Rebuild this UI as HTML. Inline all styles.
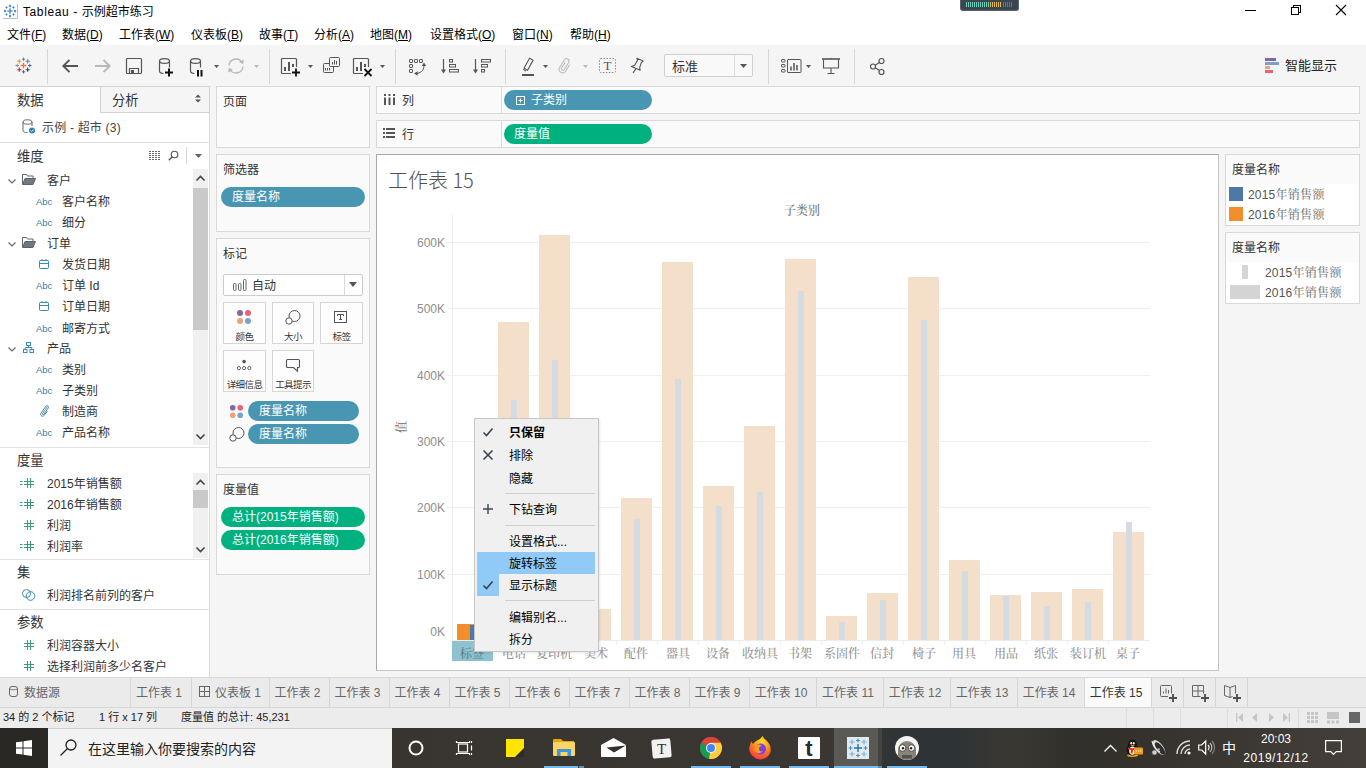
<!DOCTYPE html>
<html lang="zh-CN"><head><meta charset="utf-8"><title>Tableau - 示例超市练习</title>
<style>
*{box-sizing:border-box;margin:0;padding:0}
html,body{width:1366px;height:768px;overflow:hidden;background:#fff}
body{font-family:"Liberation Sans","Noto Sans CJK SC",sans-serif;font-size:12px;color:#333;position:relative}
.a{position:absolute;white-space:nowrap}
.t{position:absolute;white-space:nowrap;line-height:1;margin-top:1px}
.serif{font-family:"Liberation Serif","Noto Serif CJK SC",serif;font-weight:500}
.card{position:absolute;background:#fafafa;border:1px solid #d9d9d9}
.pill{position:absolute;height:20px;border-radius:10px;color:#fff;font-size:12px;line-height:20px;white-space:nowrap}
.blue{background:#4996b2}
.green{background:#00b180}
.sep{position:absolute;background:#d4d4d4}
u{text-decoration:underline;text-underline-offset:1px}
svg{position:absolute;overflow:visible}
</style></head><body>

<div class="a" style="left:0;top:0;width:1366px;height:45px;background:#fff"></div>
<svg style="left:3px;top:4px" width="15" height="15" viewBox="0 0 15 15"><rect x="0" y="0" width="14" height="14" fill="#fff"/><path d="M14.500 0v14.500H0" fill="none" stroke="#bdbdbd" stroke-width="1"/>
<g stroke="#2f7dbd" stroke-width="1.200"><path d="M7 4.200v5.600M4.200 7h5.600"/><path d="M7 0.800v2.400M5.800 2h2.400M7 10.800v2.400M5.800 12h2.400M0.800 7h2.400M2 5.800v2.400M10.800 7h2.400M12 5.800v2.400"/><path d="M3.500 2.500v2M2.500 3.500h2M10.500 2.500v2M9.500 3.500h2M3.500 9.500v2M2.500 10.500h2M10.500 9.500v2M9.500 10.500h2" stroke-width="1"/></g></svg>
<div class="t" style="left:23px;top:5px;font-size:12px;color:#000"><span style="letter-spacing:0.6px">Tableau - </span>示例超市练习</div>
<svg style="left:1240px;top:0" width="126" height="22" viewBox="0 0 126 22"><g stroke="#000" stroke-width="1" fill="none" shape-rendering="crispEdges">
<path d="M5 10.5h11"/>
<rect x="51.5" y="7.5" width="7" height="7"/><path d="M53.500 7.500v-2h7v7h-2"/>
</g><path d="M96 5l10 10M106 5l-10 10" stroke="#000" stroke-width="1.1" fill="none"/></svg>
<div class="a" style="left:960px;top:0;width:59px;height:11px;background:#3c4552;border:1px solid #5a6470;border-top:none;border-radius:0 0 3px 3px"></div>
<div class="a" style="left:966px;top:2px;width:36px;height:5px;background:repeating-linear-gradient(90deg,#6fd0b8 0 1px,transparent 1px 2px)"></div>
<div class="a" style="left:990px;top:2px;width:12px;height:5px;background:repeating-linear-gradient(90deg,#e0b84e 0 1px,#3c4552 1px 2px)"></div>
<div class="a" style="left:1003px;top:2px;width:10px;height:5px;background:repeating-linear-gradient(90deg,#6c7480 0 1px,transparent 1px 2px)"></div>
<div class="t" style="left:7px;top:28px;font-size:12px;color:#000">文件(<u>F</u>)</div>
<div class="t" style="left:62px;top:28px;font-size:12px;color:#000">数据(<u>D</u>)</div>
<div class="t" style="left:119px;top:28px;font-size:12px;color:#000">工作表(<u>W</u>)</div>
<div class="t" style="left:191px;top:28px;font-size:12px;color:#000">仪表板(<u>B</u>)</div>
<div class="t" style="left:259px;top:28px;font-size:12px;color:#000">故事(<u>T</u>)</div>
<div class="t" style="left:314px;top:28px;font-size:12px;color:#000">分析(<u>A</u>)</div>
<div class="t" style="left:370px;top:28px;font-size:12px;color:#000">地图(<u>M</u>)</div>
<div class="t" style="left:430px;top:28px;font-size:12px;color:#000">设置格式(<u>O</u>)</div>
<div class="t" style="left:512px;top:28px;font-size:12px;color:#000">窗口(<u>N</u>)</div>
<div class="t" style="left:570px;top:28px;font-size:12px;color:#000">帮助(<u>H</u>)</div>
<div class="a" style="left:0;top:45px;width:1366px;height:41px;background:#f5f5f5"></div>
<div class="a" style="left:47px;top:49px;width:1px;height:35px;background:#d6d6d6"></div>
<div class="a" style="left:269px;top:49px;width:1px;height:35px;background:#d6d6d6"></div>
<div class="a" style="left:395px;top:49px;width:1px;height:35px;background:#d6d6d6"></div>
<div class="a" style="left:505px;top:49px;width:1px;height:35px;background:#d6d6d6"></div>
<div class="a" style="left:768px;top:49px;width:1px;height:35px;background:#d6d6d6"></div>
<div class="a" style="left:854px;top:49px;width:1px;height:35px;background:#d6d6d6"></div>
<svg style="left:15px;top:57px" width="17" height="17" viewBox="0 0 17 17"><path d="M8.5 5.7v5.6M5.7 8.5h5.6" stroke="#e8762d" stroke-width="1.3"/><path d="M8.5 0.5v3.4M6.8 2.2h3.4" stroke="#5b879b" stroke-width="1.0"/><path d="M8.5 13.1v3.4M6.8 14.8h3.4" stroke="#5b6591" stroke-width="1.0"/><path d="M2.2 6.8v3.4M0.5 8.5h3.4" stroke="#7199a6" stroke-width="1.0"/><path d="M14.8 6.8v3.4M13.1 8.5h3.4" stroke="#5b6591" stroke-width="1.0"/><path d="M4.3 2.2v4.2M2.2 4.3h4.2" stroke="#eb9129" stroke-width="1.1"/><path d="M12.7 2.2v4.2M10.6 4.3h4.2" stroke="#59879b" stroke-width="1.1"/><path d="M4.3 10.6v4.2M2.2 12.7h4.2" stroke="#c72035" stroke-width="1.1"/><path d="M12.7 10.6v4.2M10.6 12.7h4.2" stroke="#1f447e" stroke-width="1.1"/></svg>
<svg style="left:62px;top:59px" width="17" height="14" viewBox="0 0 17 14"><path d="M16 7H1.500M7.500 0.800L1.300 7l6.200 6.200" fill="none" stroke="#555" stroke-width="1.900"/></svg>
<svg style="left:94px;top:59px" width="17" height="14" viewBox="0 0 17 14"><path d="M1 7h14.500M9.500 0.800L15.700 7l-6.200 6.200" fill="none" stroke="#b8b8b8" stroke-width="1.900"/></svg>
<svg style="left:126px;top:58px" width="16" height="16" viewBox="0 0 16 16"><rect x="0.500" y="0.500" width="15" height="15" rx="1" fill="none" stroke="#555" stroke-width="1.200"/><path d="M3.500 15.500v-5h9v5" fill="none" stroke="#555" stroke-width="1.200"/><rect x="5" y="12" width="3" height="3.500" fill="#555"/></svg>
<svg style="left:159px;top:58px" width="16" height="19" viewBox="0 0 16 19"><g fill="none" stroke="#555" stroke-width="1.200"><ellipse cx="5.500" cy="3" rx="5" ry="2.400"/><path d="M0.500 3v10c0 1.300 1.500 2.300 4 2.500M10.500 3v6.500"/></g><path d="M10 10.500v8M6 14.500h8" stroke="#111" stroke-width="2"/></svg>
<svg style="left:190px;top:58px" width="16" height="19" viewBox="0 0 16 19"><g fill="none" stroke="#555" stroke-width="1.200"><ellipse cx="5.500" cy="3" rx="5" ry="2.400"/><path d="M0.500 3v10c0 1.300 1.500 2.300 4 2.500M10.500 3v6.500"/></g><path d="M8 12v6.500M11.500 12v6.500" stroke="#111" stroke-width="2"/></svg>
<svg style="left:214px;top:65px" width="5" height="3" viewBox="0 0 5 3"><path d="M0 0h5l-2.500 3z" fill="#555"/></svg>
<svg style="left:227px;top:57px" width="18" height="18" viewBox="0 0 18 18"><g fill="none" stroke="#b8b8b8" stroke-width="1.300"><path d="M2 8.500a7 7 0 0 1 13-3"/><path d="M16 9.500a7 7 0 0 1-13 3"/></g><path d="M16.800 2.500l-0.600 4.800-4.200-2.300z" fill="#b8b8b8"/><path d="M1.200 15.500l0.600-4.800 4.200 2.300z" fill="#b8b8b8"/></svg>
<svg style="left:254px;top:65px" width="5" height="3" viewBox="0 0 5 3"><path d="M0 0h5l-2.500 3z" fill="#b8b8b8"/></svg>
<svg style="left:281px;top:58px" width="20" height="19" viewBox="0 0 20 19"><rect x="0.500" y="0.500" width="15" height="15" rx="1" fill="none" stroke="#555" stroke-width="1.200"/><rect x="3" y="9" width="2" height="4" fill="#555"/><rect x="7" y="4" width="2" height="9" fill="#555"/><rect x="11" y="6" width="2" height="7" fill="#555"/><rect x="10" y="9" width="10" height="10" fill="#f5f5f5"/><path d="M15 10.500v8M11 14.500h8" stroke="#111" stroke-width="1.800"/></svg>
<svg style="left:308px;top:65px" width="5" height="3" viewBox="0 0 5 3"><path d="M0 0h5l-2.500 3z" fill="#555"/></svg>
<svg style="left:323px;top:57px" width="18" height="17" viewBox="0 0 18 17"><g fill="none" stroke="#555" stroke-width="1"><rect x="0.500" y="6.500" width="10" height="9" rx="1"/><rect x="6.500" y="0.500" width="10" height="9" rx="1" fill="#f5f5f5"/><path d="M9.500 7.500v-2.500M11.500 7.500v-4.500M13.500 7.500v-3.500"/><path d="M2.500 13.500v-2.500M4.500 13.500v-2.500M6.500 13.500v-2.500"/></g></svg>
<svg style="left:353px;top:58px" width="20" height="19" viewBox="0 0 20 19"><rect x="0.500" y="0.500" width="15" height="15" rx="1" fill="none" stroke="#555" stroke-width="1.200"/><rect x="3" y="9" width="2" height="4" fill="#555"/><rect x="7" y="4" width="2" height="9" fill="#555"/><rect x="11" y="6" width="2" height="7" fill="#555"/><rect x="10" y="9" width="10" height="10" fill="#f5f5f5"/><path d="M11.500 11l7 7M18.500 11l-7 7" stroke="#111" stroke-width="1.800"/></svg>
<svg style="left:380px;top:65px" width="5" height="3" viewBox="0 0 5 3"><path d="M0 0h5l-2.500 3z" fill="#555"/></svg>
<svg style="left:409px;top:59px" width="17" height="17" viewBox="0 0 17 17"><g fill="none" stroke="#555" stroke-width="1"><rect x="0.500" y="0.500" width="3" height="3" rx="0.500"/><rect x="5.500" y="0.500" width="3" height="3" rx="0.500"/><rect x="10.500" y="0.500" width="3" height="3" rx="0.500"/><rect x="0.500" y="5.500" width="3" height="3" rx="0.500"/><rect x="0.500" y="10.500" width="3" height="3" rx="0.500"/><path d="M15 6.500c0 5-3.500 8-8.500 8"/></g><path d="M15 3.500l2.200 3.600h-4.400z" fill="#555"/><path d="M5 14.500l3.600-2.200v4.400z" fill="#555"/></svg>
<svg style="left:441px;top:59px" width="18" height="15" viewBox="0 0 18 15"><path d="M2.500 0v13" stroke="#555" stroke-width="1.200"/><path d="M0 10.500h5l-2.500 4z" fill="#555"/><g fill="none" stroke="#555"><rect x="8.500" y="0.500" width="3" height="2.500"/><rect x="8.500" y="5.500" width="6" height="2.500"/><rect x="8.500" y="10.500" width="9" height="2.500"/></g></svg>
<svg style="left:473px;top:59px" width="18" height="15" viewBox="0 0 18 15"><path d="M2.500 0v13" stroke="#555" stroke-width="1.200"/><path d="M0 10.500h5l-2.500 4z" fill="#555"/><g fill="none" stroke="#555"><rect x="8.500" y="0.500" width="9" height="2.500"/><rect x="8.500" y="5.500" width="6" height="2.500"/><rect x="8.500" y="10.500" width="3" height="2.500"/></g></svg>
<svg style="left:522px;top:57px" width="13" height="20" viewBox="0 0 13 20"><path d="M7.600 1.200L11.100 3.100L5.600 13.300L2.100 11.100zM1.300 12.300l2.800 1.800" fill="none" stroke="#555" stroke-width="1.100"/><path d="M0 18h12" stroke="#555" stroke-width="2"/></svg>
<svg style="left:543px;top:65px" width="5" height="3" viewBox="0 0 5 3"><path d="M0 0h5l-2.500 3z" fill="#555"/></svg>
<svg style="left:558px;top:57px" width="14" height="17" viewBox="0 0 14 17"><g transform="rotate(32 7 8.500) translate(4 1)"><path d="M1.500 4.500V11.500A1.500 1.500 0 0 0 4.500 11.500V3A2.500 2.500 0 0 0 -0.500 3V12A3.500 3.500 0 0 0 6.500 12V4.500" fill="none" stroke="#b8b8b8" stroke-width="1"/></g></svg>
<svg style="left:583px;top:65px" width="5" height="3" viewBox="0 0 5 3"><path d="M0 0h5l-2.500 3z" fill="#b8b8b8"/></svg>
<svg style="left:599px;top:58px" width="17" height="15" viewBox="0 0 17 15"><rect x="0.500" y="0.500" width="16" height="14" rx="1" fill="none" stroke="#8a8a8a" stroke-dasharray="1.500 1.500"/><text x="8.500" y="12.200" text-anchor="middle" font-family="Liberation Serif,serif" font-size="13" fill="#555">T</text></svg>
<svg style="left:630px;top:57px" width="14" height="17" viewBox="0 0 14 17"><path d="M6.900 1.200L13.200 4L11.300 5.600L9.700 10.600L10.200 13.300L1.400 9.500L4.700 8.200L7.500 3.400zM5.800 11.700L3.100 15.900" fill="none" stroke="#555" stroke-width="1.100" stroke-linejoin="round"/></svg>
<div class="a" style="left:664px;top:54px;width:89px;height:23px;background:#f9f9f9;border:1px solid #cfcfcf;border-radius:2px"></div>
<div class="a" style="left:734px;top:55px;width:1px;height:21px;background:#dcdcdc"></div>
<svg style="left:740px;top:64px" width="7" height="4" viewBox="0 0 7 4"><path d="M0 0h7l-3.500 4z" fill="#555"/></svg>
<div class="t" style="left:672px;top:59px;font-size:13px;color:#333">标准</div>
<svg style="left:781px;top:59px" width="21" height="14" viewBox="0 0 21 14"><g fill="none" stroke="#555"><rect x="0.500" y="0.500" width="3.500" height="2.500" rx="0.500"/><rect x="0.500" y="5.500" width="3.500" height="2.500" rx="0.500"/><rect x="0.500" y="10.500" width="3.500" height="2.500" rx="0.500"/><rect x="6.500" y="0.500" width="13.500" height="13" rx="0.500"/></g><path d="M10 11.500v-4M13 11.500v-7.500M16 11.500v-5.500" stroke="#555" stroke-width="1.500"/></svg>
<svg style="left:806px;top:65px" width="5" height="3" viewBox="0 0 5 3"><path d="M0 0h5l-2.500 3z" fill="#555"/></svg>
<svg style="left:822px;top:58px" width="18" height="17" viewBox="0 0 18 17"><path d="M0 1h18" stroke="#555" stroke-width="1.600"/><path d="M1.500 1.500v8.500h15v-8.500M9 10v5.500M5.500 15.500h7M9 0v1" fill="none" stroke="#555" stroke-width="1.100"/></svg>
<svg style="left:870px;top:58px" width="15" height="17" viewBox="0 0 15 17"><g fill="none" stroke="#555" stroke-width="1.200"><circle cx="11.500" cy="3" r="2.500"/><circle cx="3" cy="8.500" r="2.500"/><circle cx="11.500" cy="14" r="2.500"/><path d="M5.200 7.200l4.200-2.800M5.200 9.800l4.200 2.800"/></g></svg>
<div class="a" style="left:1265px;top:58px;width:11px;height:3px;background:#85689b"></div>
<div class="a" style="left:1265px;top:62px;width:14px;height:3px;background:#7a9fcb"></div>
<div class="a" style="left:1265px;top:66px;width:5px;height:3px;background:#eba473"></div>
<div class="a" style="left:1265px;top:70px;width:8px;height:3px;background:#ea6179"></div>
<div class="t" style="left:1285px;top:58px;font-size:13px;color:#222">智能显示</div>
<div class="a" style="left:0;top:86px;width:1366px;height:594px;background:#f5f5f5"></div>
<div class="a" style="left:0;top:86px;width:210px;height:591px;background:#fff;border-right:1px solid #dcdcdc;border-top:1px solid #d2d2d2"></div>
<div class="a" style="left:100px;top:86px;width:110px;height:27px;background:#f5f5f5;border:1px solid #d2d2d2"></div>
<div class="t" style="left:17px;top:93px;font-size:13.300px;color:#333">数据</div>
<div class="t" style="left:112px;top:93px;font-size:13.300px;color:#333">分析</div>
<svg style="left:195px;top:94px" width="6" height="9" viewBox="0 0 6 9"><path d="M0 3.500L3 0.500L6 3.500zM0 5.500L3 8.500L6 5.500z" fill="#555"/></svg>
<svg style="left:22px;top:119px" width="14" height="15" viewBox="0 0 14 15"><g fill="none" stroke="#666" stroke-width="1"><ellipse cx="5.500" cy="3" rx="4.500" ry="2.200"/><path d="M1 3v8.500c0 1.200 2 2.200 4.500 2.200M10 3v4"/></g><circle cx="10" cy="11.500" r="3" fill="#2f80b5"/><path d="M8.600 11.500l1 1 1.800-2" stroke="#fff" stroke-width="0.900" fill="none"/></svg>
<div class="t" style="left:42px;top:121px;font-size:12px;letter-spacing:0.200px;color:#444">示例 - 超市 (3)</div>
<div class="a" style="left:0;top:142px;width:209px;height:1px;background:#e2e2e2"></div>
<div class="t" style="left:17px;top:149px;font-size:13.300px;color:#333">维度</div>
<svg style="left:149px;top:151px" width="11" height="9" viewBox="0 0 11 9"><path d="M0 0.500h2M3 0.500h2M6 0.500h2M9 0.500h2M0 2.500h2M3 2.500h2M6 2.500h2M9 2.500h2M0 4.500h2M3 4.500h2M6 4.500h2M9 4.500h2M0 6.500h2M3 6.500h2M6 6.500h2M9 6.500h2M0 8.500h2M3 8.500h2M6 8.500h2M9 8.500h2" stroke="#666" stroke-width="1"/></svg>
<svg style="left:168px;top:150px" width="11" height="11" viewBox="0 0 11 11"><circle cx="6.500" cy="4.500" r="3.300" fill="none" stroke="#555" stroke-width="1.100"/><path d="M4 7l-3.200 3.200" stroke="#555" stroke-width="1.300"/></svg>
<div class="a" style="left:186px;top:147px;width:1px;height:17px;background:#d4d4d4"></div>
<svg style="left:195px;top:154px" width="7" height="4" viewBox="0 0 7 4"><path d="M0 0h7l-3.500 4z" fill="#666"/></svg>
<svg style="left:8px;top:179px" width="8" height="5" viewBox="0 0 8 5"><path d="M0.500 0.500l3.500 3.500 3.500-3.500" fill="none" stroke="#666" stroke-width="1.100"/></svg>
<svg style="left:22px;top:174px" width="14" height="11" viewBox="0 0 14 11"><path d="M0.500 10V0.500h4l1 1.500h5.500v2" fill="none" stroke="#666" stroke-width="1"/><path d="M0.500 10.500l2.500-6h10.500l-2.500 6z" fill="#707880" stroke="#5c6268" stroke-width="1"/></svg>
<div class="t" style="left:47px;top:174px;font-size:12px;color:#333">客户</div>
<div class="t" style="left:36px;top:196px;font-size:9.500px;color:#3b7d9c">Abc</div>
<div class="t" style="left:62px;top:195px;font-size:12px;color:#333">客户名称</div>
<div class="t" style="left:36px;top:217px;font-size:9.500px;color:#3b7d9c">Abc</div>
<div class="t" style="left:62px;top:216px;font-size:12px;color:#333">细分</div>
<svg style="left:8px;top:242px" width="8" height="5" viewBox="0 0 8 5"><path d="M0.500 0.500l3.500 3.500 3.500-3.500" fill="none" stroke="#666" stroke-width="1.100"/></svg>
<svg style="left:22px;top:237px" width="14" height="11" viewBox="0 0 14 11"><path d="M0.500 10V0.500h4l1 1.500h5.500v2" fill="none" stroke="#666" stroke-width="1"/><path d="M0.500 10.500l2.500-6h10.500l-2.500 6z" fill="#707880" stroke="#5c6268" stroke-width="1"/></svg>
<div class="t" style="left:47px;top:237px;font-size:12px;color:#333">订单</div>
<svg style="left:39px;top:259px" width="10" height="10" viewBox="0 0 10 10"><rect x="0.500" y="1.500" width="9" height="8" rx="0.800" fill="none" stroke="#3b8db0" stroke-width="1"/><path d="M0.500 4.500h9M3 0v2M7 0v2" stroke="#3b8db0" stroke-width="1"/></svg>
<div class="t" style="left:62px;top:258px;font-size:12px;color:#333">发货日期</div>
<div class="t" style="left:36px;top:280px;font-size:9.500px;color:#3b7d9c">Abc</div>
<div class="t" style="left:62px;top:279px;font-size:12px;color:#333">订单 Id</div>
<svg style="left:39px;top:301px" width="10" height="10" viewBox="0 0 10 10"><rect x="0.500" y="1.500" width="9" height="8" rx="0.800" fill="none" stroke="#3b8db0" stroke-width="1"/><path d="M0.500 4.500h9M3 0v2M7 0v2" stroke="#3b8db0" stroke-width="1"/></svg>
<div class="t" style="left:62px;top:300px;font-size:12px;color:#333">订单日期</div>
<div class="t" style="left:36px;top:323px;font-size:9.500px;color:#3b7d9c">Abc</div>
<div class="t" style="left:62px;top:322px;font-size:12px;color:#333">邮寄方式</div>
<svg style="left:8px;top:347px" width="8" height="5" viewBox="0 0 8 5"><path d="M0.500 0.500l3.500 3.500 3.500-3.500" fill="none" stroke="#666" stroke-width="1.100"/></svg>
<svg style="left:23px;top:342px" width="11" height="11" viewBox="0 0 11 11"><g fill="none" stroke="#3b8db0" stroke-width="1"><rect x="3.500" y="0.500" width="4" height="3"/><rect x="0.500" y="7.500" width="3.500" height="3"/><rect x="7" y="7.500" width="3.500" height="3"/><path d="M5.500 3.500v2M2.200 7.500v-2h6.600v2"/></g></svg>
<div class="t" style="left:47px;top:342px;font-size:12px;color:#333">产品</div>
<div class="t" style="left:36px;top:364px;font-size:9.500px;color:#3b7d9c">Abc</div>
<div class="t" style="left:62px;top:363px;font-size:12px;color:#333">类别</div>
<div class="t" style="left:36px;top:385px;font-size:9.500px;color:#3b7d9c">Abc</div>
<div class="t" style="left:62px;top:384px;font-size:12px;color:#333">子类别</div>
<svg style="left:39px;top:404px" width="11" height="13" viewBox="0 0 11 13"><path d="M8.500 2.500L3.500 9.500c-0.600 0.900 0.700 1.700 1.300 0.900L9.300 4c1.100-1.700-1.400-3.300-2.500-1.700L2 9c-1.600 2.400 1.800 4.500 3.400 2.200L8.500 7" fill="none" stroke="#3b7d9c" stroke-width="0.900"/></svg>
<div class="t" style="left:62px;top:405px;font-size:12px;color:#333">制造商</div>
<div class="t" style="left:36px;top:427px;font-size:9.500px;color:#3b7d9c">Abc</div>
<div class="t" style="left:62px;top:426px;font-size:12px;color:#333">产品名称</div>
<div class="a" style="left:193px;top:169px;width:15px;height:276px;background:#f0f0f0"></div>
<div class="a" style="left:193px;top:188px;width:15px;height:142px;background:#c9c9c9"></div>
<svg style="left:196px;top:175px" width="9" height="6" viewBox="0 0 9 6"><path d="M0.500 5.500l4-4 4 4" fill="none" stroke="#444" stroke-width="1.600"/></svg>
<svg style="left:196px;top:434px" width="9" height="6" viewBox="0 0 9 6"><path d="M0.500 0.500l4 4 4-4" fill="none" stroke="#444" stroke-width="1.600"/></svg>
<div class="a" style="left:0;top:447px;width:209px;height:1px;background:#e2e2e2"></div>
<div class="t" style="left:17px;top:453px;font-size:13.300px;color:#333">度量</div>
<svg style="left:19px;top:478px" width="16" height="10" viewBox="0 0 16 10"><g stroke="#3a9a78" stroke-width="1" fill="none"><path d="M1 3.500h2.500M1 6.500h2.500"/><path d="M5 3.500h10M5 6.500h10M8.500 0v10M11.500 0v10"/></g></svg>
<div class="t" style="left:47px;top:477px;font-size:12px;color:#333">2015年销售额</div>
<svg style="left:19px;top:499px" width="16" height="10" viewBox="0 0 16 10"><g stroke="#3a9a78" stroke-width="1" fill="none"><path d="M1 3.500h2.500M1 6.500h2.500"/><path d="M5 3.500h10M5 6.500h10M8.500 0v10M11.500 0v10"/></g></svg>
<div class="t" style="left:47px;top:498px;font-size:12px;color:#333">2016年销售额</div>
<svg style="left:19px;top:520px" width="16" height="10" viewBox="0 0 16 10"><g stroke="#3a9a78" stroke-width="1" fill="none"><path d="M5 3.500h10M5 6.500h10M8.500 0v10M11.500 0v10"/></g></svg>
<div class="t" style="left:47px;top:519px;font-size:12px;color:#333">利润</div>
<svg style="left:19px;top:541px" width="16" height="10" viewBox="0 0 16 10"><g stroke="#3a9a78" stroke-width="1" fill="none"><path d="M1 3.500h2.500M1 6.500h2.500"/><path d="M5 3.500h10M5 6.500h10M8.500 0v10M11.500 0v10"/></g></svg>
<div class="t" style="left:47px;top:540px;font-size:12px;color:#333">利润率</div>
<div class="a" style="left:193px;top:473px;width:15px;height:85px;background:#f0f0f0"></div>
<div class="a" style="left:193px;top:490px;width:15px;height:18px;background:#c9c9c9"></div>
<svg style="left:196px;top:479px" width="9" height="6" viewBox="0 0 9 6"><path d="M0.500 5.500l4-4 4 4" fill="none" stroke="#444" stroke-width="1.600"/></svg>
<svg style="left:196px;top:547px" width="9" height="6" viewBox="0 0 9 6"><path d="M0.500 0.500l4 4 4-4" fill="none" stroke="#444" stroke-width="1.600"/></svg>
<div class="a" style="left:0;top:559px;width:209px;height:1px;background:#e2e2e2"></div>
<div class="t" style="left:17px;top:565px;font-size:13.300px;color:#333">集</div>
<svg style="left:22px;top:589px" width="14" height="12" viewBox="0 0 14 12"><circle cx="4.500" cy="4.500" r="4" fill="none" stroke="#3b8db0" stroke-width="1"/><circle cx="8.500" cy="7" r="4.300" fill="none" stroke="#3b8db0" stroke-width="1"/></svg>
<div class="t" style="left:47px;top:589px;font-size:12px;color:#333">利润排名前列的客户</div>
<div class="a" style="left:0;top:609px;width:209px;height:1px;background:#e2e2e2"></div>
<div class="t" style="left:17px;top:615px;font-size:13.300px;color:#333">参数</div>
<svg style="left:19px;top:640px" width="16" height="10" viewBox="0 0 16 10"><g stroke="#3a9a78" stroke-width="1" fill="none"><path d="M5 3.500h10M5 6.500h10M8.500 0v10M11.500 0v10"/></g></svg>
<div class="t" style="left:47px;top:639px;font-size:12px;color:#333">利润容器大小</div>
<svg style="left:19px;top:661px" width="16" height="10" viewBox="0 0 16 10"><g stroke="#3a9a78" stroke-width="1" fill="none"><path d="M5 3.500h10M5 6.500h10M8.500 0v10M11.500 0v10"/></g></svg>
<div class="t" style="left:47px;top:660px;font-size:12px;color:#333">选择利润前多少名客户</div>
<div class="card" style="left:216px;top:86px;width:154px;height:62px"></div>
<div class="t" style="left:223px;top:95px;font-size:12px;color:#333">页面</div>
<div class="card" style="left:216px;top:154px;width:154px;height:78px"></div>
<div class="t" style="left:223px;top:163px;font-size:12px;color:#333">筛选器</div>
<div class="pill blue" style="left:221px;top:187px;width:144px;padding-left:11px">度量名称</div>
<div class="card" style="left:216px;top:238px;width:154px;height:230px"></div>
<div class="t" style="left:223px;top:247px;font-size:12px;color:#333">标记</div>
<div class="a" style="left:223px;top:274px;width:140px;height:22px;background:#fff;border:1px solid #ccc;border-radius:2px"></div>
<div class="a" style="left:344px;top:275px;width:1px;height:20px;background:#d9d9d9"></div>
<svg style="left:349px;top:282px" width="8" height="5" viewBox="0 0 8 5"><path d="M0 0h8l-4 5z" fill="#555"/></svg>
<svg style="left:233px;top:279px" width="15" height="12" viewBox="0 0 15 12"><g fill="none" stroke="#666" stroke-width="1"><rect x="0.500" y="4.500" width="2.500" height="7" rx="1"/><rect x="5.500" y="4.500" width="2.500" height="7" rx="1"/><rect x="10.500" y="0.500" width="2.500" height="11" rx="1"/></g></svg>
<div class="t" style="left:252px;top:279px;font-size:12px;color:#333">自动</div>
<div class="a" style="left:223px;top:302px;width:43px;height:42px;background:#fdfdfd;border:1px solid #d6d6d6"></div>
<div class="t" style="left:223px;top:331px;width:43px;text-align:center;font-size:9.500px;color:#333;letter-spacing:-0.600px">颜色</div>
<div class="a" style="left:272px;top:302px;width:42px;height:42px;background:#fdfdfd;border:1px solid #d6d6d6"></div>
<div class="t" style="left:272px;top:331px;width:42px;text-align:center;font-size:9.500px;color:#333;letter-spacing:-0.600px">大小</div>
<div class="a" style="left:320px;top:302px;width:43px;height:42px;background:#fdfdfd;border:1px solid #d6d6d6"></div>
<div class="t" style="left:320px;top:331px;width:43px;text-align:center;font-size:9.500px;color:#333;letter-spacing:-0.600px">标签</div>
<div class="a" style="left:223px;top:350px;width:43px;height:42px;background:#fdfdfd;border:1px solid #d6d6d6"></div>
<div class="t" style="left:223px;top:379px;width:43px;text-align:center;font-size:9.500px;color:#333;letter-spacing:-0.600px">详细信息</div>
<div class="a" style="left:272px;top:350px;width:42px;height:42px;background:#fdfdfd;border:1px solid #d6d6d6"></div>
<div class="t" style="left:272px;top:379px;width:42px;text-align:center;font-size:9.500px;color:#333;letter-spacing:-0.600px">工具提示</div>
<svg style="left:236px;top:309px" width="16" height="16" viewBox="0 0 16 16"><circle cx="4" cy="4" r="3" fill="#85689b"/><circle cx="12" cy="4" r="3" fill="#ea6179"/><circle cx="4" cy="12" r="3" fill="#eba473"/><circle cx="12" cy="12" r="3" fill="#7a9fcb"/></svg>
<svg style="left:285px;top:310px" width="16" height="15" viewBox="0 0 16 15"><circle cx="9.500" cy="6" r="5.500" fill="none" stroke="#555" stroke-width="1"/><circle cx="4" cy="11" r="3.200" fill="#fdfdfd" stroke="#555" stroke-width="1"/></svg>
<svg style="left:334px;top:311px" width="13" height="12" viewBox="0 0 13 12"><rect x="0.500" y="0.500" width="12" height="11" fill="none" stroke="#555" stroke-width="1"/><path d="M3.500 3.500h6M3.500 3.500v1.500M9.500 3.500v1.500M6.500 3.500v5M5 8.500h3" stroke="#555" stroke-width="1" fill="none"/></svg>
<svg style="left:236px;top:359px" width="16" height="12" viewBox="0 0 16 12"><circle cx="8.100" cy="2.600" r="1.800" fill="#555"/><circle cx="2.900" cy="9.100" r="1.600" fill="none" stroke="#555" stroke-width="0.900"/><circle cx="8.100" cy="9.100" r="1.600" fill="none" stroke="#555" stroke-width="0.900"/><circle cx="13.300" cy="9.100" r="1.600" fill="none" stroke="#555" stroke-width="0.900"/></svg>
<svg style="left:286px;top:359px" width="14" height="13" viewBox="0 0 14 13"><path d="M1.500 0.500h11a1 1 0 0 1 1 1v6a1 1 0 0 1-1 1h-1v3.700l-4-3.700h-6a1 1 0 0 1-1-1v-6a1 1 0 0 1 1-1z" fill="none" stroke="#555" stroke-width="1.100"/></svg>
<svg style="left:229px;top:404px" width="15" height="15" viewBox="0 0 16 16"><circle cx="4" cy="4" r="3" fill="#85689b"/><circle cx="12" cy="4" r="3" fill="#ea6179"/><circle cx="4" cy="12" r="3" fill="#eba473"/><circle cx="12" cy="12" r="3" fill="#7a9fcb"/></svg>
<div class="pill blue" style="left:248px;top:401px;width:111px;padding-left:11px">度量名称</div>
<svg style="left:229px;top:427px" width="16" height="15" viewBox="0 0 16 15"><circle cx="9.500" cy="6" r="5.500" fill="none" stroke="#555" stroke-width="1"/><circle cx="4" cy="11" r="3.200" fill="#fdfdfd" stroke="#555" stroke-width="1"/></svg>
<div class="pill blue" style="left:248px;top:424px;width:111px;padding-left:11px">度量名称</div>
<div class="card" style="left:216px;top:474px;width:154px;height:101px"></div>
<div class="t" style="left:223px;top:483px;font-size:12px;color:#333">度量值</div>
<div class="pill green" style="left:221px;top:507px;width:144px;padding-left:11px">总计(2015年销售额)</div>
<div class="pill green" style="left:221px;top:530px;width:144px;padding-left:11px">总计(2016年销售额)</div>
<div class="card" style="left:376px;top:86px;width:984px;height:28px"></div>
<div class="a" style="left:501px;top:87px;width:1px;height:26px;background:#d9d9d9"></div>
<div class="card" style="left:376px;top:120px;width:984px;height:28px"></div>
<div class="a" style="left:501px;top:121px;width:1px;height:26px;background:#d9d9d9"></div>
<svg style="left:384px;top:94px" width="11" height="11" viewBox="0 0 11 11"><g fill="#555"><rect x="0" y="0" width="2" height="2"/><rect x="4.500" y="0" width="2" height="2"/><rect x="9" y="0" width="2" height="2"/><rect x="0" y="3.500" width="2" height="7.500"/><rect x="4.500" y="3.500" width="2" height="7.500"/><rect x="9" y="3.500" width="2" height="7.500"/></g></svg>
<div class="t" style="left:402px;top:94px;font-size:12px;color:#333">列</div>
<svg style="left:383px;top:128px" width="12" height="10" viewBox="0 0 12 10"><g fill="#555"><rect x="0" y="0" width="2" height="2"/><rect x="0" y="4" width="2" height="2"/><rect x="0" y="8" width="2" height="2"/><rect x="3" y="0" width="9" height="2"/><rect x="3" y="4" width="9" height="2"/><rect x="3" y="8" width="9" height="2"/></g></svg>
<div class="t" style="left:402px;top:128px;font-size:12px;color:#333">行</div>
<div class="pill blue" style="left:504px;top:90px;width:148px;padding-left:27px">子类别</div>
<svg style="left:516px;top:96px" width="9" height="9" viewBox="0 0 9 9"><rect x="0.500" y="0.500" width="8" height="8" fill="none" stroke="#fff" stroke-width="1"/><path d="M4.500 2.500v4M2.500 4.500h4" stroke="#fff" stroke-width="1"/></svg>
<div class="pill green" style="left:504px;top:124px;width:148px;padding-left:10px">度量值</div>
<div class="a" style="left:376px;top:154px;width:843px;height:517px;background:#fff;border:1px solid #c4c4c4;border-left-color:#a8a8a8;border-top-color:#a8a8a8"></div>
<div class="t" style="left:388px;top:169px;font-size:20px;color:#505050;font-family:Noto Sans CJK SC,Liberation Sans,sans-serif;font-weight:300">工作表 15</div>
<div class="t serif" style="left:784px;top:204px;font-size:12px;color:#747474">子类别</div>
<div class="a" style="left:452px;top:215px;width:1px;height:426px;background:#ececec"></div>
<div class="a" style="left:452px;top:640px;width:698px;height:1px;background:#ececec"></div>
<div class="a" style="left:447px;top:242px;width:703px;height:1px;background:#efefef"></div>
<div class="t" style="right:921px;top:236px;font-size:12px;color:#8e8e8e">600K</div>
<div class="a" style="left:447px;top:308px;width:703px;height:1px;background:#efefef"></div>
<div class="t" style="right:921px;top:302px;font-size:12px;color:#8e8e8e">500K</div>
<div class="a" style="left:447px;top:375px;width:703px;height:1px;background:#efefef"></div>
<div class="t" style="right:921px;top:369px;font-size:12px;color:#8e8e8e">400K</div>
<div class="a" style="left:447px;top:441px;width:703px;height:1px;background:#efefef"></div>
<div class="t" style="right:921px;top:435px;font-size:12px;color:#8e8e8e">300K</div>
<div class="a" style="left:447px;top:507px;width:703px;height:1px;background:#efefef"></div>
<div class="t" style="right:921px;top:501px;font-size:12px;color:#8e8e8e">200K</div>
<div class="a" style="left:447px;top:574px;width:703px;height:1px;background:#efefef"></div>
<div class="t" style="right:921px;top:568px;font-size:12px;color:#8e8e8e">100K</div>
<div class="t" style="right:921px;top:625px;font-size:12px;color:#8e8e8e">0K</div>
<div class="t serif" style="left:396px;top:420px;font-size:12px;color:#747474;transform:rotate(-90deg);transform-origin:50% 50%">值</div>
<div class="a" style="left:457px;top:624px;width:31px;height:16px;background:#f28e2b"></div>
<div class="a" style="left:470px;top:625px;width:6px;height:15px;background:#4e79a7"></div>
<div class="a" style="left:452px;top:641px;width:41px;height:20px;background:#8ec2d0"></div>
<div class="t serif" style="left:442px;top:647px;width:60px;text-align:center;font-size:12px;color:#5f7f8c">标签</div>
<div class="a" style="left:498px;top:322px;width:31px;height:318px;background:#f4dfcb"></div>
<div class="a" style="left:511px;top:400px;width:6px;height:240px;background:#d5dbe3"></div>
<div class="a" style="left:493px;top:641px;width:1px;height:4px;background:#efefef"></div>
<div class="t serif" style="left:484px;top:647px;width:60px;text-align:center;font-size:12px;color:#939393">电话</div>
<div class="a" style="left:539px;top:235px;width:31px;height:405px;background:#f4dfcb"></div>
<div class="a" style="left:552px;top:360px;width:6px;height:280px;background:#d5dbe3"></div>
<div class="a" style="left:534px;top:641px;width:1px;height:4px;background:#efefef"></div>
<div class="t serif" style="left:524px;top:647px;width:60px;text-align:center;font-size:12px;color:#939393">复印机</div>
<div class="a" style="left:580px;top:609px;width:31px;height:31px;background:#f4dfcb"></div>
<div class="a" style="left:575px;top:641px;width:1px;height:4px;background:#efefef"></div>
<div class="t serif" style="left:566px;top:647px;width:60px;text-align:center;font-size:12px;color:#939393">美术</div>
<div class="a" style="left:621px;top:498px;width:31px;height:142px;background:#f4dfcb"></div>
<div class="a" style="left:634px;top:519px;width:6px;height:121px;background:#d5dbe3"></div>
<div class="a" style="left:616px;top:641px;width:1px;height:4px;background:#efefef"></div>
<div class="t serif" style="left:606px;top:647px;width:60px;text-align:center;font-size:12px;color:#939393">配件</div>
<div class="a" style="left:662px;top:262px;width:31px;height:378px;background:#f4dfcb"></div>
<div class="a" style="left:675px;top:379px;width:6px;height:261px;background:#d5dbe3"></div>
<div class="a" style="left:657px;top:641px;width:1px;height:4px;background:#efefef"></div>
<div class="t serif" style="left:648px;top:647px;width:60px;text-align:center;font-size:12px;color:#939393">器具</div>
<div class="a" style="left:703px;top:486px;width:31px;height:154px;background:#f4dfcb"></div>
<div class="a" style="left:716px;top:506px;width:6px;height:134px;background:#d5dbe3"></div>
<div class="a" style="left:698px;top:641px;width:1px;height:4px;background:#efefef"></div>
<div class="t serif" style="left:688px;top:647px;width:60px;text-align:center;font-size:12px;color:#939393">设备</div>
<div class="a" style="left:744px;top:426px;width:31px;height:214px;background:#f4dfcb"></div>
<div class="a" style="left:757px;top:492px;width:6px;height:148px;background:#d5dbe3"></div>
<div class="a" style="left:739px;top:641px;width:1px;height:4px;background:#efefef"></div>
<div class="t serif" style="left:730px;top:647px;width:60px;text-align:center;font-size:12px;color:#939393">收纳具</div>
<div class="a" style="left:785px;top:259px;width:31px;height:381px;background:#f4dfcb"></div>
<div class="a" style="left:798px;top:291px;width:6px;height:349px;background:#d5dbe3"></div>
<div class="a" style="left:780px;top:641px;width:1px;height:4px;background:#efefef"></div>
<div class="t serif" style="left:770px;top:647px;width:60px;text-align:center;font-size:12px;color:#939393">书架</div>
<div class="a" style="left:826px;top:616px;width:31px;height:24px;background:#f4dfcb"></div>
<div class="a" style="left:839px;top:622px;width:6px;height:18px;background:#d5dbe3"></div>
<div class="a" style="left:821px;top:641px;width:1px;height:4px;background:#efefef"></div>
<div class="t serif" style="left:812px;top:647px;width:60px;text-align:center;font-size:12px;color:#939393">系固件</div>
<div class="a" style="left:867px;top:593px;width:31px;height:47px;background:#f4dfcb"></div>
<div class="a" style="left:880px;top:600px;width:6px;height:40px;background:#d5dbe3"></div>
<div class="a" style="left:862px;top:641px;width:1px;height:4px;background:#efefef"></div>
<div class="t serif" style="left:852px;top:647px;width:60px;text-align:center;font-size:12px;color:#939393">信封</div>
<div class="a" style="left:908px;top:277px;width:31px;height:363px;background:#f4dfcb"></div>
<div class="a" style="left:921px;top:320px;width:6px;height:320px;background:#d5dbe3"></div>
<div class="a" style="left:903px;top:641px;width:1px;height:4px;background:#efefef"></div>
<div class="t serif" style="left:894px;top:647px;width:60px;text-align:center;font-size:12px;color:#939393">椅子</div>
<div class="a" style="left:949px;top:560px;width:31px;height:80px;background:#f4dfcb"></div>
<div class="a" style="left:962px;top:571px;width:6px;height:69px;background:#d5dbe3"></div>
<div class="a" style="left:944px;top:641px;width:1px;height:4px;background:#efefef"></div>
<div class="t serif" style="left:934px;top:647px;width:60px;text-align:center;font-size:12px;color:#939393">用具</div>
<div class="a" style="left:990px;top:595px;width:31px;height:45px;background:#f4dfcb"></div>
<div class="a" style="left:1003px;top:596px;width:6px;height:44px;background:#d5dbe3"></div>
<div class="a" style="left:985px;top:641px;width:1px;height:4px;background:#efefef"></div>
<div class="t serif" style="left:976px;top:647px;width:60px;text-align:center;font-size:12px;color:#939393">用品</div>
<div class="a" style="left:1031px;top:592px;width:31px;height:48px;background:#f4dfcb"></div>
<div class="a" style="left:1044px;top:606px;width:6px;height:34px;background:#d5dbe3"></div>
<div class="a" style="left:1026px;top:641px;width:1px;height:4px;background:#efefef"></div>
<div class="t serif" style="left:1016px;top:647px;width:60px;text-align:center;font-size:12px;color:#939393">纸张</div>
<div class="a" style="left:1072px;top:589px;width:31px;height:51px;background:#f4dfcb"></div>
<div class="a" style="left:1085px;top:602px;width:6px;height:38px;background:#d5dbe3"></div>
<div class="a" style="left:1067px;top:641px;width:1px;height:4px;background:#efefef"></div>
<div class="t serif" style="left:1058px;top:647px;width:60px;text-align:center;font-size:12px;color:#939393">装订机</div>
<div class="a" style="left:1113px;top:532px;width:31px;height:108px;background:#f4dfcb"></div>
<div class="a" style="left:1126px;top:522px;width:6px;height:118px;background:#d5dbe3"></div>
<div class="a" style="left:1108px;top:641px;width:1px;height:4px;background:#efefef"></div>
<div class="t serif" style="left:1098px;top:647px;width:60px;text-align:center;font-size:12px;color:#939393">桌子</div>
<div class="a" style="left:474px;top:418px;width:125px;height:234px;background:#f0f0f0;border:1px solid #c6c6c6;box-shadow:1px 1px 2px rgba(0,0,0,.10)"></div>
<div class="a" style="left:477px;top:552px;width:118px;height:22px;background:#91c9f7"></div>
<div class="a" style="left:477px;top:574px;width:22px;height:22px;background:#91c9f7"></div>
<div class="t" style="left:509px;top:426px;font-size:12px;color:#000;font-weight:bold;">只保留</div>
<div class="t" style="left:509px;top:449px;font-size:12px;color:#000;">排除</div>
<div class="t" style="left:509px;top:472px;font-size:12px;color:#000;">隐藏</div>
<div class="t" style="left:509px;top:503px;font-size:12px;color:#000;">下钻查询</div>
<div class="t" style="left:509px;top:535px;font-size:12px;color:#000;">设置格式...</div>
<div class="t" style="left:509px;top:557px;font-size:12px;color:#000;">旋转标签</div>
<div class="t" style="left:509px;top:579px;font-size:12px;color:#000;">显示标题</div>
<div class="t" style="left:509px;top:611px;font-size:12px;color:#000;">编辑别名...</div>
<div class="t" style="left:509px;top:633px;font-size:12px;color:#000;">拆分</div>
<div class="a" style="left:505px;top:493px;width:90px;height:1px;background:#d0d0d0"></div>
<div class="a" style="left:505px;top:525px;width:90px;height:1px;background:#d0d0d0"></div>
<div class="a" style="left:505px;top:600px;width:90px;height:1px;background:#d0d0d0"></div>
<svg style="left:481px;top:425px" width="14" height="14" viewBox="0 0 14 14"><path d="M2.500 7.500l3 3 6-7" stroke="#3a4450" stroke-width="1.6" fill="none"/></svg>
<svg style="left:481px;top:448px" width="14" height="14" viewBox="0 0 14 14"><path d="M2.500 2.500l9 9M11.500 2.500l-9 9" stroke="#3a4450" stroke-width="1.6" fill="none"/></svg>
<svg style="left:481px;top:502px" width="14" height="14" viewBox="0 0 14 14"><path d="M7 2v10M2 7h10" stroke="#3a4450" stroke-width="1.4" fill="none"/></svg>
<svg style="left:481px;top:578px" width="14" height="14" viewBox="0 0 14 14"><path d="M2.500 7.500l3 3 6-7" stroke="#3a4450" stroke-width="1.6" fill="none"/></svg>
<div class="a" style="left:1225px;top:154px;width:135px;height:72px;background:#fff;border:1px solid #d9d9d9"></div>
<div class="a" style="left:1226px;top:155px;width:133px;height:29px;background:#fafafa"></div>
<div class="t" style="left:1232px;top:163px;font-size:12px;color:#333">度量名称</div>
<div class="a" style="left:1229px;top:187px;width:14px;height:14px;background:#4e79a7"></div>
<div class="a" style="left:1229px;top:207px;width:14px;height:14px;background:#f28e2b"></div>
<div class="t" style="left:1248px;top:188px;font-size:12px;color:#555;letter-spacing:0.200px">2015<span class="serif" style="color:#7c7c7c;letter-spacing:0.300px">年销售额</span></div>
<div class="t" style="left:1248px;top:208px;font-size:12px;color:#555;letter-spacing:0.200px">2016<span class="serif" style="color:#7c7c7c;letter-spacing:0.300px">年销售额</span></div>
<div class="a" style="left:1225px;top:232px;width:135px;height:72px;background:#fff;border:1px solid #d9d9d9"></div>
<div class="a" style="left:1226px;top:233px;width:133px;height:29px;background:#fafafa"></div>
<div class="t" style="left:1232px;top:241px;font-size:12px;color:#333">度量名称</div>
<div class="a" style="left:1242px;top:265px;width:6px;height:14px;background:#d4d4d4"></div>
<div class="a" style="left:1230px;top:285px;width:30px;height:14px;background:#d4d4d4"></div>
<div class="t" style="left:1265px;top:266px;font-size:12px;color:#555;letter-spacing:0.200px">2015<span class="serif" style="color:#7c7c7c;letter-spacing:0.300px">年销售额</span></div>
<div class="t" style="left:1265px;top:286px;font-size:12px;color:#555;letter-spacing:0.200px">2016<span class="serif" style="color:#7c7c7c;letter-spacing:0.300px">年销售额</span></div>
<div class="a" style="left:0;top:677px;width:1366px;height:30px;background:#ebebeb;border-top:1px solid #d8d8d8"></div>
<div class="a" style="left:130px;top:678px;width:1px;height:29px;background:#d6d6d6"></div>
<div class="a" style="left:191px;top:678px;width:1px;height:29px;background:#d6d6d6"></div>
<div class="a" style="left:269px;top:678px;width:1px;height:29px;background:#d6d6d6"></div>
<div class="a" style="left:329px;top:678px;width:1px;height:29px;background:#d6d6d6"></div>
<div class="a" style="left:389px;top:678px;width:1px;height:29px;background:#d6d6d6"></div>
<div class="a" style="left:449px;top:678px;width:1px;height:29px;background:#d6d6d6"></div>
<div class="a" style="left:509px;top:678px;width:1px;height:29px;background:#d6d6d6"></div>
<div class="a" style="left:569px;top:678px;width:1px;height:29px;background:#d6d6d6"></div>
<div class="a" style="left:629px;top:678px;width:1px;height:29px;background:#d6d6d6"></div>
<div class="a" style="left:689px;top:678px;width:1px;height:29px;background:#d6d6d6"></div>
<div class="a" style="left:749px;top:678px;width:1px;height:29px;background:#d6d6d6"></div>
<div class="a" style="left:816px;top:678px;width:1px;height:29px;background:#d6d6d6"></div>
<div class="a" style="left:883px;top:678px;width:1px;height:29px;background:#d6d6d6"></div>
<div class="a" style="left:950px;top:678px;width:1px;height:29px;background:#d6d6d6"></div>
<div class="a" style="left:1017px;top:678px;width:1px;height:29px;background:#d6d6d6"></div>
<div class="a" style="left:1084px;top:678px;width:1px;height:29px;background:#d6d6d6"></div>
<div class="a" style="left:1151px;top:678px;width:1px;height:29px;background:#d6d6d6"></div>
<div class="a" style="left:1183px;top:678px;width:1px;height:29px;background:#d6d6d6"></div>
<div class="a" style="left:1215px;top:678px;width:1px;height:29px;background:#d6d6d6"></div>
<div class="a" style="left:1247px;top:678px;width:1px;height:29px;background:#d6d6d6"></div>
<div class="a" style="left:1085px;top:678px;width:66px;height:30px;background:#fafafa"></div>
<svg style="left:9px;top:686px" width="9" height="11" viewBox="0 0 9 11"><rect x="0.500" y="0.500" width="8" height="10" rx="2.500" fill="none" stroke="#666"/><path d="M0.500 3c1.500 1 6.500 1 8 0" fill="none" stroke="#666" stroke-width="0.800"/></svg>
<div class="t" style="left:24px;top:686px;font-size:12px;color:#666">数据源</div>
<div class="t" style="left:129px;top:686px;width:60px;text-align:center;font-size:12px;color:#666">工作表 1</div>
<svg style="left:199px;top:686px" width="11" height="11" viewBox="0 0 11 11"><rect x="0.500" y="0.500" width="10" height="10" fill="none" stroke="#666"/><path d="M5.500 0.500v10M0.500 5.500h10" stroke="#666"/></svg>
<div class="t" style="left:215px;top:686px;font-size:12px;color:#666">仪表板 1</div>
<div class="t" style="left:268px;top:686px;width:59px;text-align:center;font-size:12px;color:#666">工作表 2</div>
<div class="t" style="left:328px;top:686px;width:59px;text-align:center;font-size:12px;color:#666">工作表 3</div>
<div class="t" style="left:388px;top:686px;width:59px;text-align:center;font-size:12px;color:#666">工作表 4</div>
<div class="t" style="left:448px;top:686px;width:59px;text-align:center;font-size:12px;color:#666">工作表 5</div>
<div class="t" style="left:508px;top:686px;width:59px;text-align:center;font-size:12px;color:#666">工作表 6</div>
<div class="t" style="left:568px;top:686px;width:59px;text-align:center;font-size:12px;color:#666">工作表 7</div>
<div class="t" style="left:628px;top:686px;width:59px;text-align:center;font-size:12px;color:#666">工作表 8</div>
<div class="t" style="left:688px;top:686px;width:59px;text-align:center;font-size:12px;color:#666">工作表 9</div>
<div class="t" style="left:748px;top:686px;width:66px;text-align:center;font-size:12px;color:#666">工作表 10</div>
<div class="t" style="left:815px;top:686px;width:66px;text-align:center;font-size:12px;color:#666">工作表 11</div>
<div class="t" style="left:882px;top:686px;width:66px;text-align:center;font-size:12px;color:#666">工作表 12</div>
<div class="t" style="left:949px;top:686px;width:66px;text-align:center;font-size:12px;color:#666">工作表 13</div>
<div class="t" style="left:1016px;top:686px;width:66px;text-align:center;font-size:12px;color:#666">工作表 14</div>
<div class="t" style="left:1083px;top:686px;width:66px;text-align:center;font-size:12px;color:#333">工作表 15</div>
<svg style="left:1160px;top:685px" width="18" height="17" viewBox="0 0 18 17"><path d="M11.500 8.500v-7a1 1 0 0 0-1-1h-9a1 1 0 0 0-1 1v9a1 1 0 0 0 1 1h6.500" fill="none" stroke="#666"/><path d="M3.500 8.500v-2M6 8.500v-5M8.500 8.500v-3.500" stroke="#666"/><path d="M13 9v8M9 13h8" stroke="#505050" stroke-width="1.900"/></svg>
<svg style="left:1192px;top:685px" width="18" height="17" viewBox="0 0 18 17"><path d="M11.500 8.500v-8h-11v11h8M6 0.500v11M0.500 6h11" fill="none" stroke="#666"/><path d="M13 9v8M9 13h8" stroke="#505050" stroke-width="1.900"/></svg>
<svg style="left:1224px;top:685px" width="18" height="17" viewBox="0 0 18 17"><path d="M11.500 8.500v-8l-5.500 2-5.500-2v10l5.500 2 2.500-1M6 2.500v10" fill="none" stroke="#666"/><path d="M13 9v8M9 13h8" stroke="#505050" stroke-width="1.900"/></svg>
<div class="a" style="left:0;top:707px;width:1366px;height:21px;background:#ececec;border-top:1px solid #d6d6d6"></div>
<div class="t" style="left:3px;top:711px;font-size:11px;color:#222">34 的 2 个标记</div>
<div class="t" style="left:99px;top:711px;font-size:11px;color:#222">1 行 x 17 列</div>
<div class="t" style="left:181px;top:711px;font-size:11px;color:#222">度量值 的总计: 45,231</div>
<div class="a" style="left:1126px;top:707px;width:1px;height:21px;background:#dcdcdc"></div>
<div class="a" style="left:1153px;top:707px;width:1px;height:21px;background:#dcdcdc"></div>
<div class="a" style="left:1180px;top:707px;width:1px;height:21px;background:#dcdcdc"></div>
<div class="a" style="left:1227px;top:707px;width:1px;height:21px;background:#dcdcdc"></div>
<div class="a" style="left:1298px;top:707px;width:1px;height:21px;background:#dcdcdc"></div>
<svg style="left:1236px;top:713px" width="56" height="9" viewBox="0 0 56 9"><g fill="#c6c6c6"><rect x="0" y="0" width="1.300" height="9"/><path d="M7 0v9l-5-4.500z"/><path d="M21 0v9l-5-4.500z"/><path d="M33 0v9l5-4.500z"/><path d="M47 0v9l5-4.500z"/><rect x="52.700" y="0" width="1.300" height="9"/></g></svg>
<svg style="left:1307px;top:712px" width="12" height="12" viewBox="0 0 12 12"><g fill="#c6c6c6"><rect x="0" y="0" width="3" height="3"/><rect x="0" y="4" width="3" height="3"/><rect x="0" y="8" width="3" height="3"/><rect x="4" y="0" width="3" height="3"/><rect x="4" y="4" width="3" height="3"/><rect x="4" y="8" width="3" height="3"/><rect x="8" y="0" width="3" height="3"/><rect x="8" y="4" width="3" height="3"/><rect x="8" y="8" width="3" height="3"/></g></svg>
<svg style="left:1327px;top:712px" width="12" height="12" viewBox="0 0 12 12"><g fill="#c6c6c6"><rect x="0" y="0" width="12" height="7"/><rect x="0" y="8.500" width="3" height="3"/><rect x="4.500" y="8.500" width="3" height="3"/><rect x="9" y="8.500" width="3" height="3"/></g></svg>
<div class="a" style="left:1349px;top:712px;width:11px;height:11px;background:#666"></div>
<div class="a" style="left:0;top:728px;width:1366px;height:40px;background:linear-gradient(90deg,#383531 0,#383531 391px,#3a3733 830px,#303436 900px,#2e3335 950px,#3a3833 1010px,#312f2b 1080px,#393530 1200px,#443f39 1366px)"></div>
<div class="a" style="left:0;top:728px;width:48px;height:40px;background:#2a2825"></div>
<svg style="left:16px;top:740px" width="16" height="16" viewBox="0 0 16 16"><path d="M0 2.300l6.500-0.900v6.100h-6.500zM7.500 1.300l8.500-1.300v7.500h-8.500zM0 8.500h6.500v6.100l-6.500-0.900zM7.500 8.500h8.500v7.500l-8.500-1.300z" fill="#fff"/></svg>
<div class="a" style="left:48px;top:728px;width:344px;height:40px;background:#f3f3f3;border-top:1px solid #cfcfcf"></div>
<svg style="left:60px;top:739px" width="17" height="17" viewBox="0 0 17 17"><circle cx="11" cy="6" r="5" fill="none" stroke="#222" stroke-width="1.300"/><path d="M7.500 9.500l-7 7" stroke="#222" stroke-width="1.300"/></svg>
<div class="t" style="left:88px;top:741px;font-size:14px;color:#222">在这里输入你要搜索的内容</div>
<svg style="left:408px;top:740px" width="16" height="16" viewBox="0 0 16 16"><circle cx="8" cy="8" r="6.500" fill="none" stroke="#fff" stroke-width="2"/></svg>
<svg style="left:456px;top:740px" width="17" height="16" viewBox="0 0 17 16"><g fill="none" stroke="#fff" stroke-width="1.200"><rect x="2.500" y="4" width="9" height="8"/><path d="M0.500 1v1.500h13V1M0.500 15v-1.500h13V15M15.500 1v2M15.500 5.500v5M15.500 13v2"/></g></svg>
<svg style="left:506px;top:739px" width="18" height="18" viewBox="0 0 18 18"><rect width="18" height="18" fill="#ffe500"/><path d="M18 9v9h-9z" fill="#2b2b2b"/></svg>
<svg style="left:553px;top:738px" width="22" height="19" viewBox="0 0 22 19"><path d="M0 2a1 1 0 0 1 1-1h7l2 2h11v3h-21z" fill="#e8a317"/><rect x="0" y="4" width="22" height="14" rx="1" fill="#fcd462"/><path d="M4 18v-7h14v7h-3.500v-4h-7v4z" fill="#3d95e0"/></svg>
<div class="a" style="left:544px;top:766px;width:34px;height:2px;background:#76b9ed"></div>
<div class="a" style="left:579px;top:766px;width:5px;height:2px;background:#5b8fb8"></div>
<svg style="left:601px;top:738px" width="25" height="19" viewBox="0 0 25 19"><path d="M0 7L12.500 0 25 7v12H0z" fill="#fff"/><path d="M5.500 9.500L25 7.500 13 14.500z" fill="#34312d"/><path d="M25 7.500v11.500H8z" fill="#fff"/></svg>
<svg style="left:650px;top:737px" width="23" height="23" viewBox="0 0 23 23"><rect x="2" y="2" width="19" height="19" rx="2" fill="#f2f2f2" transform="rotate(-5 11.500 11.500)"/><text x="11.500" y="17" text-anchor="middle" font-family="Liberation Serif,serif" font-size="15" fill="#333">T</text></svg>
<svg style="left:700px;top:737px" width="22" height="22" viewBox="0 0 22 22"><circle cx="11" cy="11" r="11" fill="#db4437"/><path d="M11 11L1.500 5.500A11 11 0 0 0 9 21.800z" fill="#0f9d58"/><path d="M11 11l-2 10.800A11 11 0 0 0 20.500 5.500H11z" fill="#ffcd40"/><path d="M11 11L1.500 5.500A11 11 0 0 1 20.500 5.500H11z" fill="#db4437"/><circle cx="11" cy="11" r="5" fill="#fff"/><circle cx="11" cy="11" r="4" fill="#4285f4"/></svg>
<div class="a" style="left:691px;top:766px;width:40px;height:2px;background:#76b9ed"></div>
<svg style="left:748px;top:736px" width="24" height="24" viewBox="0 0 24 24"><defs><radialGradient id="ff" cx="0.600" cy="0.250" r="0.900"><stop offset="0" stop-color="#ffe226"/><stop offset="0.450" stop-color="#ff8a16"/><stop offset="0.850" stop-color="#ff3647"/><stop offset="1" stop-color="#e31587"/></radialGradient></defs><path d="M12 3c1-2 3-3 3-3 0 2 2 3 4 5 4 4 5 9 2 14-3 4-9 6-14 3C2 19 0 14 2 9c0-1 1-3 2-4 0 1 0 2 1 3 1-2 4-4 7-5z" fill="url(#ff)"/><circle cx="12.500" cy="13" r="5.500" fill="#7542e5"/><path d="M7 10c2-2 5-2 7 0-2 0-3 1-3 3s2 3 4 2c-2 3-7 3-9-1z" fill="#ff9a1f"/></svg>
<div class="a" style="left:740px;top:766px;width:40px;height:2px;background:#76b9ed"></div>
<svg style="left:798px;top:737px" width="22" height="22" viewBox="0 0 22 22"><rect width="22" height="22" rx="1" fill="#fff"/><text x="11" y="18.500" text-anchor="middle" font-family="Liberation Sans,sans-serif" font-weight="bold" font-size="22" fill="#2b2b2b">t</text></svg>
<div class="a" style="left:789px;top:766px;width:40px;height:2px;background:#76b9ed"></div>
<div class="a" style="left:834px;top:728px;width:44px;height:40px;background:#5b5955"></div>
<div class="a" style="left:878px;top:728px;width:4px;height:40px;background:#45433f"></div>
<svg style="left:847px;top:737px" width="22" height="22" viewBox="0 0 22 22"><rect width="22" height="22" fill="#e3ebf2"/><path d="M11.0 7.0v8.0M7.0 11.0h8.0" stroke="#1f77b4" stroke-width="1.4"/><path d="M5.0 2.4v5.2M2.4 5.0h5.2" stroke="#7fb2d6" stroke-width="1.2"/><path d="M17.0 2.4v5.2M14.4 5.0h5.2" stroke="#7fb2d6" stroke-width="1.2"/><path d="M5.0 14.4v5.2M2.4 17.0h5.2" stroke="#7fb2d6" stroke-width="1.2"/><path d="M17.0 14.4v5.2M14.4 17.0h5.2" stroke="#7fb2d6" stroke-width="1.2"/><path d="M11.0 1.5v4.0M9.0 3.5h4.0" stroke="#4a90c2" stroke-width="1.1"/><path d="M11.0 16.5v4.0M9.0 18.5h4.0" stroke="#4a90c2" stroke-width="1.1"/><path d="M3.5 9.0v4.0M1.5 11.0h4.0" stroke="#4a90c2" stroke-width="1.1"/><path d="M18.5 9.0v4.0M16.5 11.0h4.0" stroke="#4a90c2" stroke-width="1.1"/></svg>
<div class="a" style="left:834px;top:766px;width:44px;height:2px;background:#76b9ed"></div>
<div class="a" style="left:878px;top:766px;width:4px;height:2px;background:#5b8fb8"></div>
<svg style="left:895px;top:736px" width="24" height="24" viewBox="0 0 24 24"><circle cx="12" cy="12" r="12" fill="#f4f4f2"/><path d="M3 14a9 9 0 0 1 18 0v6a12 12 0 0 1-18 0z" fill="#8a8378"/><circle cx="7.500" cy="12" r="3.300" fill="#fff" stroke="#333" stroke-width="0.800"/><circle cx="16.500" cy="12" r="3.300" fill="#fff" stroke="#333" stroke-width="0.800"/><circle cx="8" cy="12.300" r="1.200" fill="#222"/><circle cx="16" cy="12.300" r="1.200" fill="#222"/><path d="M7 19h10v3.500H7z" fill="#555"/></svg>
<div class="a" style="left:887px;top:766px;width:40px;height:2px;background:#76b9ed"></div>
<svg style="left:1104px;top:744px" width="13" height="8" viewBox="0 0 13 8"><path d="M0.500 7.500l6-6 6 6" fill="none" stroke="#fff" stroke-width="1.300"/></svg>
<svg style="left:1126px;top:739px" width="17" height="18" viewBox="0 0 17 18"><ellipse cx="6.500" cy="16.600" rx="5.500" ry="1.300" fill="#f5a800"/><path d="M6.500 0.500c2.600 0 4 2 4.200 4.500 0.100 1.500 1.800 3.500 1.800 6 0 2.800-2.300 5.500-6 5.500s-6-2.700-6-5.500c0-2.500 1.700-4.500 1.800-6 0.200-2.500 1.600-4.500 4.200-4.500z" fill="#151515"/><ellipse cx="6.500" cy="11.800" rx="3.300" ry="4" fill="#fff"/><path d="M2.200 8.300c2.500 1.200 6 1.200 8.600 0l0.500 1.800c-1.500 0.800-3 1.100-4.300 1.100l-0.400 3.300-2-0.300 0.300-3.200c-1.200-0.200-2.300-0.500-3.200-1z" fill="#e8262b"/><ellipse cx="5.200" cy="4.300" rx="0.900" ry="1.300" fill="#fff"/><ellipse cx="7.800" cy="4.300" rx="0.900" ry="1.300" fill="#fff"/><ellipse cx="6.500" cy="6.700" rx="2" ry="0.700" fill="#f5a800"/><rect x="8" y="8.500" width="9" height="7" rx="1.300" fill="#f39a1e"/><circle cx="10.300" cy="12" r="0.700" fill="#fff3c4"/><circle cx="12.500" cy="12" r="0.700" fill="#fff3c4"/><circle cx="14.700" cy="12" r="0.700" fill="#fff3c4"/></svg>
<svg style="left:1150px;top:739px" width="17" height="18" viewBox="0 0 17 18"><ellipse cx="9" cy="8.500" rx="4" ry="9" transform="rotate(-38 9 8.500)" fill="#d9d9d9"/><ellipse cx="10" cy="9.500" rx="3" ry="7.500" transform="rotate(-38 10 9.500)" fill="#2e2e2e"/><path d="M2 2c1 5 4 9 8 11" stroke="#f2f2f2" stroke-width="1.200" fill="none"/><circle cx="4.500" cy="13.500" r="2.300" fill="#cfcfcf" stroke="#8a8a8a" stroke-width="0.600"/><circle cx="8.500" cy="10.500" r="1.300" fill="#bdbdbd"/></svg>
<svg style="left:1176px;top:740px" width="15" height="15" viewBox="0 0 15 15"><g fill="none" stroke="#ddd" stroke-width="1.400"><path d="M1 14A13 13 0 0 1 14 1"/><path d="M5 14a9 9 0 0 1 9-9"/><path d="M9 14a5 5 0 0 1 5-5"/></g><circle cx="13" cy="13" r="1.600" fill="#fff"/></svg>
<svg style="left:1198px;top:740px" width="17" height="15" viewBox="0 0 17 15"><path d="M0.700 5h3l4-4v13l-4-4h-3z" fill="none" stroke="#fff" stroke-width="1.200"/><g fill="none" stroke="#fff" stroke-width="1.100"><path d="M10 5a3.500 3.500 0 0 1 0 5"/><path d="M12 3a6.500 6.500 0 0 1 0 9" opacity="0.700"/><path d="M14 1a9.500 9.500 0 0 1 0 13" opacity="0.400"/></g></svg>
<div class="t" style="left:1222px;top:740px;font-size:14px;color:#fff">中</div>
<div class="t" style="left:1243px;top:732px;width:66px;text-align:center;font-size:12px;color:#fff">20:03</div>
<div class="t" style="left:1240px;top:751px;width:72px;text-align:center;font-size:12px;letter-spacing:0.550px;color:#fff">2019/12/12</div>
<svg style="left:1325px;top:740px" width="17" height="17" viewBox="0 0 17 17"><path d="M0.600 0.600h15.800v11h-5.200l-2.700 2.700-2.700-2.700h-5.200z" fill="none" stroke="#fff" stroke-width="1.200"/></svg>
</body></html>
